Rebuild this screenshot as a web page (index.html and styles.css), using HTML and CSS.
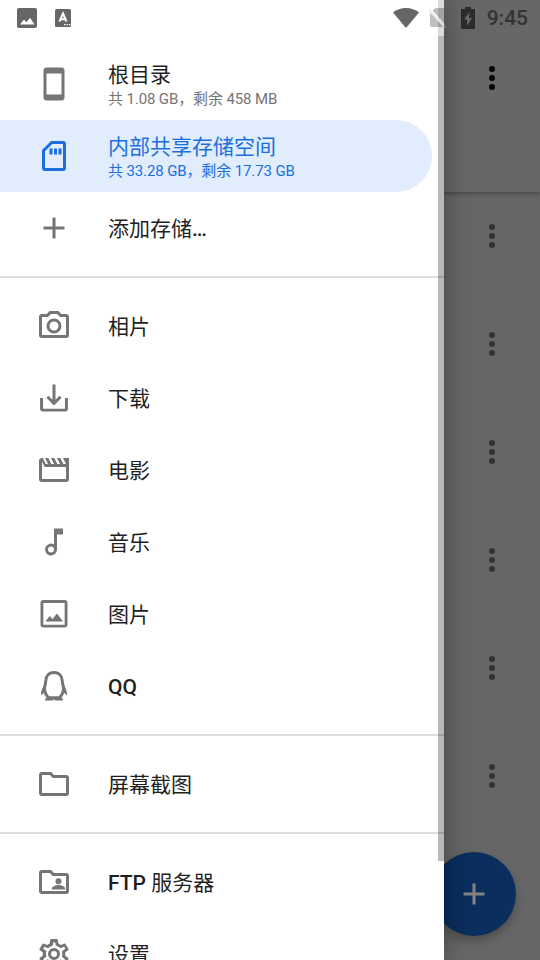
FILE: index.html
```html
<!DOCTYPE html>
<html lang="zh-CN">
<head>
<meta charset="utf-8">
<title>文件</title>
<link rel="stylesheet" href="styles.css">
</head>
<body>
<div class="screen">
  <main class="page">
    <header class="appbar"><svg class="dots" viewBox="0 0 6 24"><circle cx="3" cy="3" r="3"/><circle cx="3" cy="12" r="3"/><circle cx="3" cy="21" r="3"/></svg></header>
    <div class="files">
      <div class="file"><svg class="dots" viewBox="0 0 6 24"><circle cx="3" cy="3" r="3"/><circle cx="3" cy="12" r="3"/><circle cx="3" cy="21" r="3"/></svg></div>
      <div class="file"><svg class="dots" viewBox="0 0 6 24"><circle cx="3" cy="3" r="3"/><circle cx="3" cy="12" r="3"/><circle cx="3" cy="21" r="3"/></svg></div>
      <div class="file"><svg class="dots" viewBox="0 0 6 24"><circle cx="3" cy="3" r="3"/><circle cx="3" cy="12" r="3"/><circle cx="3" cy="21" r="3"/></svg></div>
      <div class="file"><svg class="dots" viewBox="0 0 6 24"><circle cx="3" cy="3" r="3"/><circle cx="3" cy="12" r="3"/><circle cx="3" cy="21" r="3"/></svg></div>
      <div class="file"><svg class="dots" viewBox="0 0 6 24"><circle cx="3" cy="3" r="3"/><circle cx="3" cy="12" r="3"/><circle cx="3" cy="21" r="3"/></svg></div>
      <div class="file"><svg class="dots" viewBox="0 0 6 24"><circle cx="3" cy="3" r="3"/><circle cx="3" cy="12" r="3"/><circle cx="3" cy="21" r="3"/></svg></div>
    </div>
    <div class="fab"><svg class="icon" viewBox="0 0 24 24"><path d="M11 5h2v6h6v2h-6v6h-2v-6H5v-2h6z"/></svg></div>
  </main>

  <nav class="drawer">
    <section class="group">
      <div class="item">
        <svg class="icon" viewBox="0 0 24 24"><path d="M17 1H7a2 2 0 0 0-2 2v18a2 2 0 0 0 2 2h10a2 2 0 0 0 2-2V3a2 2 0 0 0-2-2zm0 18H7V5h10z"/></svg>
        <div class="label"><div class="name">根目录</div><div class="detail">共 1.08 GB，剩余 458 MB</div></div>
      </div>
      <div class="item selected">
        <svg class="icon" viewBox="0 0 24 24"><path d="M18 2h-8L4 8v12a2 2 0 0 0 2 2h12a2 2 0 0 0 2-2V4a2 2 0 0 0-2-2zm0 18H6V8.830L10.830 4H18zM9 7h2v4H9zm3 0h2v4h-2zm3 0h2v4h-2z"/></svg>
        <div class="label"><div class="name">内部共享存储空间</div><div class="detail">共 33.28 GB，剩余 17.73 GB</div></div>
      </div>
      <div class="item">
        <svg class="icon" viewBox="0 0 24 24"><path d="M11 5h2v6h6v2h-6v6h-2v-6H5v-2h6z"/></svg>
        <div class="name single">添加存储<b>…</b></div>
      </div>
    </section>
    <section class="group">
      <div class="item">
        <svg class="icon" viewBox="0 0 24 24"><path d="M20 4h-3.170L15 2H9L7.170 4H4a2 2 0 0 0-2 2v12a2 2 0 0 0 2 2h16a2 2 0 0 0 2-2V6a2 2 0 0 0-2-2zm0 14H4V6h4.050l1.830-2h4.240l1.830 2H20zM12 7a5 5 0 1 0 0 10 5 5 0 0 0 0-10zm0 8a3 3 0 1 1 0-6 3 3 0 0 1 0 6z"/></svg>
        <div class="name single">相片</div>
      </div>
      <div class="item">
        <svg class="icon" viewBox="0 0 24 24"><path d="M11 3h2v10.200l2.700-2.700 1.400 1.400-5.100 5.100-5.100-5.100 1.400-1.400 2.700 2.700zM2.700 12h2v7.200h14.600V12h2v7a2 2 0 0 1-2 2H4.700a2 2 0 0 1-2-2z"/></svg>
        <div class="name single">下载</div>
      </div>
      <div class="item">
        <svg class="icon" viewBox="0 0 24 24"><path d="M18 4l2 4h-1.800l-2-4h-2.200l2 4h-1.800l-2-4H10l2 4h-1.800l-2-4H6l2 4H6.500L4.600 4H4a2 2 0 0 0-2 2v12a2 2 0 0 0 2 2h16a2 2 0 0 0 2-2V4zM4 18V6.500L5.760 10H20v8z"/></svg>
        <div class="name single">电影</div>
      </div>
      <div class="item">
        <svg class="icon" viewBox="0 0 24 24"><path d="M12 3v10.550A4 4 0 1 0 14 17V7h4V3zM10 19a2 2 0 1 1 0-4 2 2 0 0 1 0 4z"/></svg>
        <div class="name single">音乐</div>
      </div>
      <div class="item">
        <svg class="icon" viewBox="0 0 24 24"><path d="M19 2.700H5a2 2 0 0 0-2 2V19a2 2 0 0 0 2 2h14a2 2 0 0 0 2-2V4.700a2 2 0 0 0-2-2zm.1 16.400H4.900V4.700h14.200zM6.200 17l2.900-3.700 1.900 2 3-3.600L18 17z"/></svg>
        <div class="name single">图片</div>
      </div>
      <div class="item">
        <svg class="icon" viewBox="0 0 24 24"><path class="line" d="M6.400 9.200C6.400 5.300 8.600 3 12 3s5.600 2.300 5.600 6.200c0 1.500.7 2.800.7 4.600 0 2.300-1 4.300-2.800 6.100h-7c-1.800-1.800-2.800-3.800-2.800-6.100 0-1.800.7-3.100.7-4.600z"/><path d="M5.500 11.200C4 13.700 3.200 15.700 3.300 18.200l2.500-2.100zm13 0c1.500 2.500 2.300 4.500 2.200 7l-2.500-2.100zM8 19.500c-1.200.3-2 1-2 2.100h5l1-.8 1 .8h5c0-1.100-.8-1.800-2-2.100z"/></svg>
        <div class="name single latin">QQ</div>
      </div>
    </section>
    <section class="group">
      <div class="item">
        <svg class="icon" viewBox="0 0 24 24"><path d="M9.170 6l2 2H20v10H4V6zM10 4H4a2 2 0 0 0-2 2v12a2 2 0 0 0 2 2h16a2 2 0 0 0 2-2V8a2 2 0 0 0-2-2h-8z"/></svg>
        <div class="name single">屏幕截图</div>
      </div>
    </section>
    <section class="group">
      <div class="item">
        <svg class="icon" viewBox="0 0 24 24"><path d="M9.170 6l2 2H20v10H4V6zM10 4H4a2 2 0 0 0-2 2v12a2 2 0 0 0 2 2h16a2 2 0 0 0 2-2V8a2 2 0 0 0-2-2h-8z"/><circle cx="15" cy="11.500" r="2"/><path d="M10.600 17v-.8c0-1.330 2.900-2.200 4.400-2.200s4.400.87 4.400 2.200v.8z"/></svg>
        <div class="name single"><b>FTP</b> 服务器</div>
      </div>
      <div class="item">
        <svg class="icon" viewBox="0 0 24 24"><path d="M19.430 12.980c.04-.32.07-.64.07-.98s-.03-.66-.07-.98l2.110-1.650c.19-.15.24-.42.12-.64l-2-3.460c-.12-.22-.39-.3-.61-.22l-2.490 1c-.52-.4-1.080-.73-1.690-.98l-.38-2.650A.49.49 0 0 0 14 2h-4c-.25 0-.46.18-.49.420l-.38 2.650c-.61.25-1.170.59-1.690.98l-2.490-1c-.23-.09-.49 0-.61.220l-2 3.460c-.13.22-.07.49.12.640l2.110 1.650c-.04.32-.07.65-.07.980s.03.66.07.980l-2.110 1.650c-.19.15-.24.42-.12.640l2 3.460c.12.22.39.3.61.220l2.490-1c.52.4 1.080.73 1.690.980l.38 2.650c.03.24.24.42.49.420h4c.25 0 .46-.18.49-.42l.38-2.650c.61-.25 1.170-.59 1.690-.98l2.490 1c.23.09.49 0 .61-.22l2-3.460c.12-.22.07-.49-.12-.64zm-1.980-1.710c.07.53.07.93 0 1.460l-.14 1.130 1.590 1.250.5.400-.7 1.210-1.900-.76-.6-.25-.7.550c-.43.32-.84.56-1.250.73l-1.060.43-.3 1.980h-1.400l-.27-2-1.060-.43a5.700 5.700 0 0 1-1.230-.71l-.91-.7-2.490 1.010-.7-1.210 2.060-1.600-.14-1.130a6 6 0 0 1 0-1.460l.14-1.130-2.060-1.600.7-1.210 2.490 1.010.9-.7c.41-.32.83-.55 1.240-.72l1.060-.43.270-2h1.390l.280 2 1.060.43c.43.18.83.41 1.230.71l.91.70 2.490-1.010.7 1.210-2.060 1.600zM12 8a4 4 0 1 0 0 8 4 4 0 0 0 0-8zm0 6a2 2 0 1 1 0-4 2 2 0 0 1 0 4z"/></svg>
        <div class="name single">设置</div>
      </div>
    </section>
  </nav>
  <div class="scrollbar"></div>

  <div class="statusbar">
    <svg class="s-image" viewBox="0 0 20 20"><path fill-rule="evenodd" d="M2 0h16a2 2 0 0 1 2 2v16a2 2 0 0 1-2 2H2a2 2 0 0 1-2-2V2a2 2 0 0 1 2-2zm1 16.500h14.500L13 9.800l-3.500 4.400L7 11.500z"/></svg>
    <svg class="s-input" viewBox="0 0 16 18"><rect width="16" height="18" rx="1.500"/><path class="mark" d="M4.500 12.500L8 4.500l3.500 8M5.800 10.200h4.400"/><path class="ticks" d="M9 15.700h1.500m1 0H13m1 0h1.500"/></svg>
    <svg class="s-wifi" viewBox="0 0 26 20"><path d="M13 20L0 4.500C3.500 1.500 8 0 13 0s9.500 1.500 13 4.500z"/></svg>
    <svg class="s-sim" viewBox="0 0 20 20"><path d="M7.500 0H16v15L4.500 2.500zM2 4.500L15.500 19H4a2 2 0 0 1-2-2z"/><path class="slash" d="M.7 1.500L16 17.800"/><path class="slash-dim" d="M16 17.800l2 2"/></svg>
    <svg class="s-battery" viewBox="0 0 14 22"><path d="M4 0h6v2h4v20H0V2h4z"/><path class="bolt" d="M8.500 5L3 12.500h3V19l5-8H8z"/></svg>
    <span class="clock">9:45</span>
  </div>
</div>
</body>
</html>
```
FILE: styles.css
```css
* { box-sizing: border-box; }
body { margin: 0; font-family: Roboto, "Noto Sans CJK SC", sans-serif; }
.screen { position: relative; width: 540px; height: 960px; overflow: hidden; background: #666; }
svg { display: block; flex: none; }
.icon { width: 36px; height: 36px; fill: currentColor; }
.line { fill: none; stroke: currentColor; stroke-width: 2; }

.page { height: 960px; }
.appbar { height: 192px; padding: 66px 45px 0 0; display: flex; justify-content: flex-end; background: #676767; box-shadow: 0 1px 5px rgba(0,0,0,.4); }
.dots { width: 6px; height: 24px; fill: #333; }
.appbar .dots { fill: #050505; }
.files { margin-top: -10px; }
.file { height: 108px; padding-right: 45px; display: flex; justify-content: flex-end; align-items: center; }
.fab { position: absolute; left: 432px; top: 852px; width: 84px; height: 84px; border-radius: 50%; background: #0a2e5d; color: #858585; display: flex; align-items: center; justify-content: center; box-shadow: 0 5px 9px rgba(0,0,0,.25); }

.drawer { position: absolute; left: 0; top: 0; width: 444px; height: 960px; padding-top: 36px; background: #fff; overflow: hidden; box-shadow: 0 0 24px rgba(0,0,0,.35); }
.group { padding: 12px 0; }
.group + .group { border-top: 2px solid #dedede; }
.item { height: 72px; padding-left: 36px; display: flex; align-items: center; gap: 36px; color: #757575; }
.name { color: #1f1f1f; font-size: 21px; line-height: 30px; white-space: nowrap; }
.single { padding-top: 2px; }
.name b, .latin { font-weight: 500; }
.detail { font-size: 15px; line-height: 18px; letter-spacing: -.12px; white-space: nowrap; }
.selected { width: 432px; border-radius: 0 36px 36px 0; background: #e1edfc; color: #1b6fde; }
.selected .name { color: inherit; }
.scrollbar { position: absolute; left: 438px; top: 0; width: 6px; height: 861px; background: linear-gradient(rgba(0,0,0,.14) 36px, rgba(0,0,0,.28) 36px); }

.statusbar { position: absolute; inset: 0 0 auto; height: 36px; display: flex; align-items: center; padding: 0 12px 0 17px; fill: #666; }
.s-image { width: 20px; height: 20px; }
.s-input { width: 16px; height: 18px; margin-left: 18px; }
.s-wifi { width: 26px; height: 20px; margin-left: 322px; }
.s-sim { width: 20px; height: 20px; margin-left: 9px; fill: rgba(0,0,0,.25); }
.s-battery { width: 14px; height: 22px; margin-left: 13px; fill: #2b2b2b; }
.bolt { fill: #666; }
.mark, .ticks, .slash, .slash-dim { fill: none; stroke: #fff; stroke-width: 2; }
.ticks { stroke-width: 1.3; }
.slash { stroke: #e6e6e6; stroke-width: 1.5; }
.slash-dim { stroke: #888; stroke-width: 1.5; }
.clock { margin-left: auto; font-size: 21px; font-weight: 500; color: #333; }
```
